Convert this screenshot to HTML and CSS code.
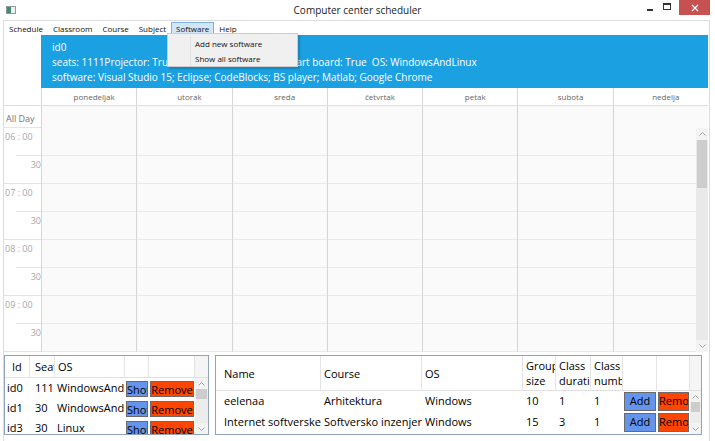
FILE: index.html
```html
<!DOCTYPE html>
<html>
<head>
<meta charset="utf-8">
<title>Computer center scheduler</title>
<link rel="stylesheet" href="styles.css">
</head>
<body>
<div class="window">
  <header class="titlebar">
    <div class="app-icon"><span class="app-icon-pane"></span></div>
    <div class="title">Computer center scheduler</div>
    <div class="win-buttons">
      <span class="wbtn"><span class="min-glyph"></span></span>
      <span class="wbtn"><span class="max-glyph"></span></span>
      <span class="wbtn close"><svg width="8" height="8" viewBox="0 0 8 8"><path d="M1 1L7 7M7 1L1 7" stroke="#fff" stroke-width="1.3" fill="none"/></svg></span>
    </div>
  </header>

  <div class="client">
    <nav class="menubar">
      <span class="menu-item">Schedule</span>
      <span class="menu-item">Classroom</span>
      <span class="menu-item">Course</span>
      <span class="menu-item">Subject</span>
      <span class="menu-item open">Software</span>
      <span class="menu-item">Help</span>
    </nav>

    <div class="dropdown">
      <div class="dd-item">Add new software</div>
      <div class="dd-item">Show all software</div>
    </div>

    <section class="calendar">
      <div class="room-info">
        <div>id0</div>
        <div>seats: 1111Projector: True<span class="field-gap"></span>Smart board: True&nbsp; OS: WindowsAndLinux</div>
        <div>software: Visual Studio 15; Eclipse; CodeBlocks; BS player; Matlab; Google Chrome</div>
      </div>

      <div class="day-header">
        <div class="gutter"></div>
        <div class="day">ponedeljak</div>
        <div class="day">utorak</div>
        <div class="day">sreda</div>
        <div class="day">četvrtak</div>
        <div class="day">petak</div>
        <div class="day">subota</div>
        <div class="day">nedelja</div>
      </div>

      <div class="allday">
        <div class="allday-label">All Day</div>
        <div class="ad-cell"></div>
        <div class="ad-cell"></div>
        <div class="ad-cell"></div>
        <div class="ad-cell"></div>
        <div class="ad-cell"></div>
        <div class="ad-cell"></div>
        <div class="ad-cell"></div>
      </div>

      <div class="timeline">
        <div class="time-gutter">
          <div class="tslot hour"><span>06 : 00</span></div>
          <div class="tslot half"><span>30</span></div>
          <div class="tslot hour"><span>07 : 00</span></div>
          <div class="tslot half"><span>30</span></div>
          <div class="tslot hour"><span>08 : 00</span></div>
          <div class="tslot half"><span>30</span></div>
          <div class="tslot hour"><span>09 : 00</span></div>
          <div class="tslot half"><span>30</span></div>
        </div>
        <div class="day-columns">
          <div class="day-col"></div>
          <div class="day-col"></div>
          <div class="day-col"></div>
          <div class="day-col"></div>
          <div class="day-col"></div>
          <div class="day-col"></div>
          <div class="day-col"></div>
        </div>
        <div class="vscroll">
          <div class="sb-arrow"><svg width="7" height="4" viewBox="0 0 7 4"><path d="M0.5 3.5L3.5 0.5L6.5 3.5" stroke="#a6a6a6" fill="none"/></svg></div>
          <div class="sb-thumb big"></div>
          <div class="sb-track"></div>
          <div class="sb-arrow"><svg width="7" height="4" viewBox="0 0 7 4"><path d="M0.5 0.5L3.5 3.5L6.5 0.5" stroke="#a6a6a6" fill="none"/></svg></div>
        </div>
      </div>
    </section>

    <section class="bottom">
      <div class="dgrid rooms">
        <div class="dg-body">
          <div class="hcell first">Id</div>
          <div class="hcell c2">Seats</div>
          <div class="hcell">OS</div>
          <div class="hcell"></div>
          <div class="hcell"></div>

          <div class="cell">id0</div>
          <div class="cell c2">111</div>
          <div class="cell">WindowsAndLinux</div>
          <div class="btn-cell"><div class="btn blue">Show</div></div>
          <div class="btn-cell"><div class="btn red">Remove</div></div>

          <div class="cell">id1</div>
          <div class="cell c2">30</div>
          <div class="cell">WindowsAndLinux</div>
          <div class="btn-cell"><div class="btn blue">Show</div></div>
          <div class="btn-cell"><div class="btn red">Remove</div></div>

          <div class="cell">id3</div>
          <div class="cell c2">30</div>
          <div class="cell">Linux</div>
          <div class="btn-cell"><div class="btn blue">Show</div></div>
          <div class="btn-cell"><div class="btn red">Remove</div></div>
        </div>
        <div class="dg-scroll">
          <div class="dg-scroll-head"></div>
          <div class="sb-arrow"><svg width="7" height="4" viewBox="0 0 7 4"><path d="M0.5 3.5L3.5 0.5L6.5 3.5" stroke="#a6a6a6" fill="none"/></svg></div>
          <div class="sb-thumb small"></div>
          <div class="sb-track"></div>
          <div class="sb-arrow"><svg width="7" height="4" viewBox="0 0 7 4"><path d="M0.5 0.5L3.5 3.5L6.5 0.5" stroke="#a6a6a6" fill="none"/></svg></div>
        </div>
      </div>

      <div class="dgrid classes">
        <div class="dg-body">
          <div class="hcell lead">Name</div>
          <div class="hcell">Course</div>
          <div class="hcell">OS</div>
          <div class="hcell wrap">Group size</div>
          <div class="hcell wrap">Class duration</div>
          <div class="hcell wrap">Class number</div>
          <div class="hcell"></div>
          <div class="hcell"></div>

          <div class="cell lead">eelenaa</div>
          <div class="cell">Arhitektura</div>
          <div class="cell">Windows</div>
          <div class="cell">10</div>
          <div class="cell">1</div>
          <div class="cell">1</div>
          <div class="btn-cell"><div class="btn blue">Add</div></div>
          <div class="btn-cell"><div class="btn red">Remove</div></div>

          <div class="cell lead">Internet softverske arhitekture</div>
          <div class="cell">Softversko inzenjerstvo</div>
          <div class="cell">Windows</div>
          <div class="cell">15</div>
          <div class="cell">3</div>
          <div class="cell">1</div>
          <div class="btn-cell"><div class="btn blue">Add</div></div>
          <div class="btn-cell"><div class="btn red">Remove</div></div>
        </div>
        <div class="dg-scroll">
          <div class="dg-scroll-head tall"></div>
          <div class="sb-arrow"><svg width="7" height="4" viewBox="0 0 7 4"><path d="M0.5 3.5L3.5 0.5L6.5 3.5" stroke="#a6a6a6" fill="none"/></svg></div>
          <div class="sb-thumb small"></div>
          <div class="sb-track"></div>
          <div class="sb-arrow"><svg width="7" height="4" viewBox="0 0 7 4"><path d="M0.5 0.5L3.5 3.5L6.5 0.5" stroke="#a6a6a6" fill="none"/></svg></div>
        </div>
      </div>
    </section>
  </div>
</div>
</body>
</html>
```

FILE: styles.css
```css
* { box-sizing: border-box; }
html, body { margin: 0; padding: 0; }
body {
  width: 715px;
  height: 441px;
  overflow: hidden;
  background: #ffffff;
  font-family: "Open Sans", "Noto Sans", sans-serif;
  color: #000;
}

.window {
  display: flex;
  flex-direction: column;
  height: 441px;
}

/* ---------- title bar ---------- */
.titlebar {
  height: 20px;
  flex: none;
  display: grid;
  grid-template-columns: 1fr auto 1fr;
  align-items: start;
}
.app-icon {
  margin: 6px 0 0 6px;
  width: 10px;
  height: 8px;
  border: 1px solid #8c9a9c;
  background: #eef2f3;
  display: flex;
}
.app-icon-pane {
  width: 4px;
  background: #3f8c72;
}
.title {
  font-size: 10px;
  line-height: 20px;
  color: #222;
}
.win-buttons {
  justify-self: end;
  display: flex;
  margin-right: 5px;
}
.wbtn {
  width: 17px;
  height: 15px;
  display: flex;
  align-items: center;
  justify-content: center;
}
.min-glyph {
  width: 6px;
  height: 2px;
  background: #333;
  margin-top: 5px;
}
.max-glyph {
  width: 8px;
  height: 7px;
  border: 1px solid #333;
  border-top-width: 2px;
  margin-top: -2px;
}
.wbtn.close {
  width: 31px;
  margin-left: 4px;
  background: #c75050;
}

/* ---------- client area ---------- */
.client {
  flex: 1;
  position: relative;
  margin: 0 5px 0 3px;
  border: 1px solid #dcdcdc;
  border-bottom: none;
  display: flex;
  flex-direction: column;
}

.menubar {
  height: 14px;
  flex: none;
  display: flex;
  align-items: flex-start;
  font-size: 8px;
  color: #111;
}
.menu-item {
  padding: 0 4px;
  margin-top: 1px;
  height: 12px;
  line-height: 11px;
  border: 1px solid transparent;
}
.menu-item.open {
  background: #d3e6f7;
  border-color: #7db2e6;
}

.dropdown {
  position: absolute;
  left: 163px;
  top: 12px;
  width: 131px;
  height: 34px;
  background: #f0f0f0 linear-gradient(#e2e2e2, #e2e2e2) no-repeat 22px 2px / 1px 30px;
  border: 1px solid #cccccc;
  box-shadow: 2px 2px 2px rgba(0, 0, 0, 0.18);
  padding: 2px 0 0 27px;
  font-size: 8px;
  color: #111;
  z-index: 5;
}
.dd-item {
  height: 15px;
  line-height: 15px;
}

/* ---------- calendar ---------- */
.calendar {
  flex: none;
  display: flex;
  flex-direction: column;
  padding-right: 1px;
}
.room-info {
  margin-left: 37px;
  height: 53px;
  background: #1ba1e2;
  color: #fff;
  font-size: 10px;
  line-height: 15px;
  padding: 5px 0 0 11px;
  white-space: nowrap;
}
.field-gap {
  display: inline-block;
  width: 108px;
}

.day-header {
  height: 18px;
  display: grid;
  grid-template-columns: 37px repeat(7, 1fr);
  border-bottom: 1px solid #dedede;
}
.day {
  border-left: 1px solid #d6d6d6;
  font-size: 8px;
  color: #666;
  text-align: center;
  padding-left: 10px;
  line-height: 17px;
}

.allday {
  height: 22px;
  display: grid;
  grid-template-columns: 37px repeat(7, 1fr);
  border-bottom: 1px solid #e6e6e6;
}
.allday-label {
  font-size: 9px;
  color: #777;
  line-height: 22px;
  padding: 2px 0 0 2px;
}
.ad-cell {
  border-left: 1px solid #d6d6d6;
  background: #fafafa;
}

.timeline {
  height: 224px;
  display: flex;
}
.time-gutter {
  width: 37px;
  flex: none;
  display: flex;
  flex-direction: column;
}
.tslot {
  height: 28px;
  font-size: 9px;
  color: #a8a8a8;
}
.tslot.hour {
  padding: 2px 0 0 1px;
  background: linear-gradient(#e3e3e3, #e3e3e3) no-repeat 12px 100% / calc(100% - 12px) 1px;
}
.tslot.half {
  text-align: right;
  padding-top: 2px;
  border-bottom: 1px solid #e3e3e3;
}
.day-columns {
  flex: 1;
  display: grid;
  grid-template-columns: repeat(6, 95.286px) 1fr;
}
.day-col {
  border-left: 1px solid #d6d6d6;
  background: repeating-linear-gradient(to bottom, #fafafa 0 27px, #e9e9e9 27px 28px);
}

.vscroll {
  width: 12px;
  flex: none;
  display: flex;
  flex-direction: column;
  background: #e9e9e9;
}
.sb-arrow {
  height: 12px;
  flex: none;
  display: flex;
  align-items: center;
  justify-content: center;
  background: #f3f3f3;
}
.sb-thumb {
  flex: none;
  margin: 0 1px;
  background: #cdcdcd;
}
.sb-thumb.big { height: 48px; }
.sb-thumb.small { height: 10px; }
.sb-track { flex: 1; }

/* ---------- bottom data grids ---------- */
.bottom {
  margin-top: 3px;
  height: 80px;
  flex: none;
  display: flex;
  gap: 6px;
}
.dgrid {
  height: 80px;
  border: 1px solid #8fa3ba;
  display: flex;
  overflow: hidden;
  background: #fff;
}
.dgrid.rooms { width: 205px; }
.dgrid.classes { width: 487px; }

.dg-body {
  flex: 1;
  display: grid;
  align-content: start;
  font-size: 11px;
  overflow: hidden;
}
.rooms .dg-body {
  grid-template-columns: 25px 25px 70px 24px 46px;
  grid-template-rows: 22px 20px 20px 20px;
}
.classes .dg-body {
  grid-template-columns: 105px 101px 101px 33px 35px 32px 34px 33px;
  grid-template-rows: 35px 21px 21px;
}

.hcell {
  border-right: 1px solid #e4e4e4;
  border-bottom: 1px solid #e0e0e0;
  padding-left: 3px;
  white-space: nowrap;
  overflow: hidden;
  display: flex;
  align-items: center;
  line-height: 15px;
}
.hcell.first { padding-left: 7px; }
.hcell.lead, .cell.lead { padding-left: 8px; }
.hcell.wrap {
  white-space: normal;
  word-break: normal;
}

.cell {
  padding-left: 3px;
  white-space: nowrap;
  overflow: hidden;
  line-height: 20px;
}
.rooms .cell { padding-left: 2px; line-height: 19px; }
.rooms .c2 { padding-left: 5px; }

.btn-cell {
  padding: 1px;
  overflow: hidden;
}
.rooms .btn-cell { padding: 3px 1px 1px; }
.btn {
  height: 100%;
  border: 1px solid #6a6a6a;
  text-align: center;
  white-space: nowrap;
  overflow: hidden;
  font-size: 11px;
  line-height: 16px;
}
.btn.blue { background: #6495ed; }
.btn.red { background: #ff4500; }

.dg-scroll {
  flex: none;
  display: flex;
  flex-direction: column;
  background: #ececec;
}
.rooms .dg-scroll { width: 13px; }
.classes .dg-scroll { width: 11px; }
.dg-scroll-head {
  height: 22px;
  flex: none;
  background: #f5f5f5;
  border-bottom: 1px solid #e0e0e0;
}
.dg-scroll-head.tall { height: 35px; }
.dg-scroll .sb-arrow { height: 11px; }
```
